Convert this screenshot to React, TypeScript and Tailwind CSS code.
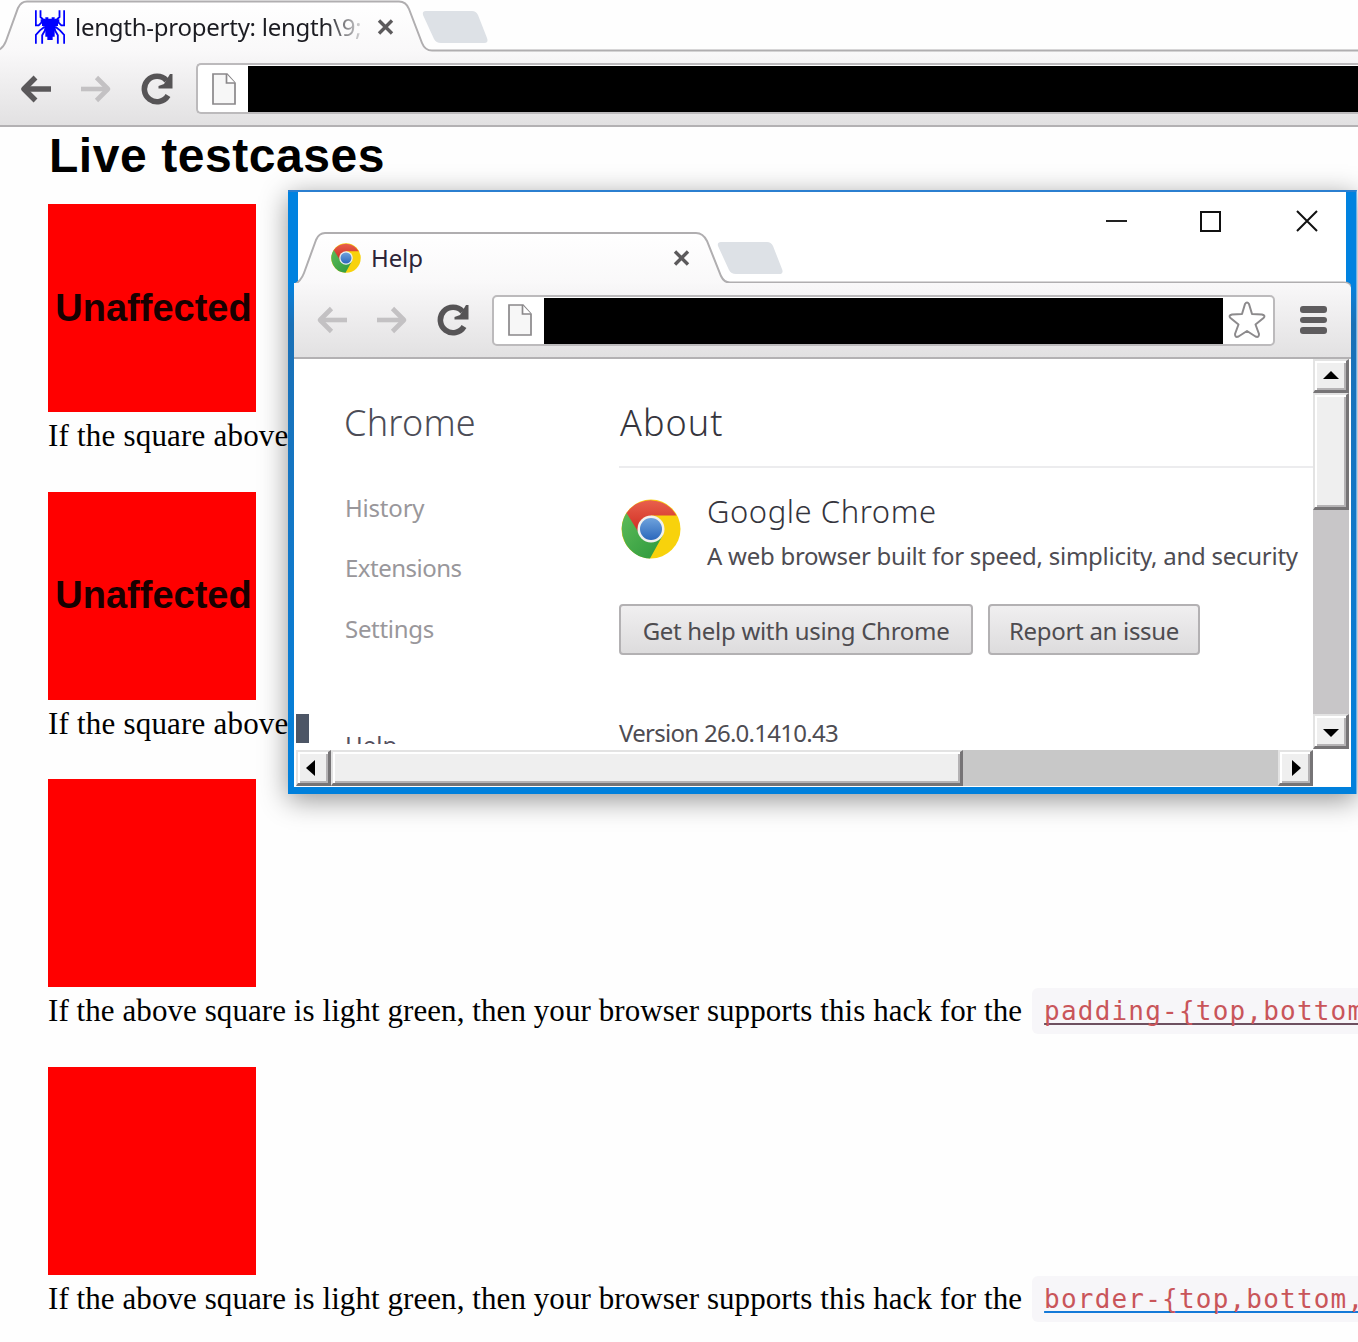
import React from "react";

const SANS = "font-['Noto_Sans','Open_Sans',sans-serif]";

function Spider() {
  return (
    <svg className="h-[34px] w-[30px]" viewBox="105 30 90 102" fill="none" stroke="#0000ff" strokeWidth="5.500">
      <path d="M107.500 31V76H116L124 68H133M121.500 31V51L130 59H136M192.500 31V76H184L176 68H167M178.500 31V51L170 59H164" />
      <path d="M107.500 131V105L120 91L134 80M126.500 131V106L137 88M192.500 131V105L180 91L166 80M173.500 131V106L163 88" />
      <path stroke="none" fill="#0000ff" d="M136 52H145V56H155V52H164V58H178V66H174V78H167V90H164V110H158V120H142V110H136V90H133V78H126V66H122V58H136Z" />
    </svg>
  );
}

function Arrow({ dark = false, flip = false }: { dark?: boolean; flip?: boolean }) {
  return (
    <svg className={flip ? "h-[28px] w-[32px] -scale-x-100" : "h-[28px] w-[32px]"} viewBox="0 0 32 28" fill="none" stroke={dark ? "#5a585a" : "#c3c1c3"} strokeWidth={dark ? 5.500 : 4.600}>
      <path d="M3.500 14H31" />
      <path d="M15.500 2.500L4 14L15.500 25.500" strokeLinejoin="round" />
    </svg>
  );
}

function Reload() {
  return (
    <svg className="h-[32px] w-[32px]" viewBox="0 0 32 32">
      <path d="M25.500 7.500A12.700 12.700 0 1 0 27 22.500" fill="none" stroke="#565456" strokeWidth="5.600" />
      <path d="M31.500 1V15.500H17.500V13L23 11L29 1Z" fill="#565456" />
    </svg>
  );
}

function PageIcon() {
  return (
    <svg className="h-[32px] w-[24px]" viewBox="0 0 24 32" fill="#f7f7f7" stroke="#8a888a" strokeWidth="1.700">
      <path d="M1 1H15L23 10V31H1Z" />
      <path d="M14.500 1V10H23" fill="#fff" />
    </svg>
  );
}

function CloseMark() {
  return (
    <svg className="h-[16px] w-[17px]" viewBox="0 0 17 16" stroke="#5c5a5c" strokeWidth="3.400">
      <path d="M2 1.500L15 14.500M15 1.500L2 14.500" />
    </svg>
  );
}

function NewTab() {
  return (
    <svg className="h-[34px] w-[67px]" viewBox="0 0 67 34">
      <path d="M4 1H50Q54 1 56 5L65 28Q67 33 62 33H19Q14 33 12 29L1 5Q0 1 4 1Z" fill="#dde1e6" />
    </svg>
  );
}

function ChromeLogo({ className }: { className: string }) {
  return (
    <svg className={className} viewBox="0 0 60 60">
      <defs>
        <linearGradient id="lr" x2="0" y2="1"><stop stopColor="#e8604c" /><stop offset="1" stopColor="#cf2a20" /></linearGradient>
        <linearGradient id="lg" x2="1" y2="1"><stop stopColor="#5dbb58" /><stop offset="1" stopColor="#2c983c" /></linearGradient>
        <linearGradient id="lb" x2="0" y2="1"><stop stopColor="#6ea2dc" /><stop offset="1" stopColor="#2c68bc" /></linearGradient>
      </defs>
      <circle cx="30" cy="30" r="29.500" fill="#f8d20c" />
      <path d="M30 30L5.500 14A29.500 29.500 0 0 0 29 59.500L42 36Z" fill="url(#lg)" />
      <path d="M30 30L18 34L5.500 14A29.500 29.500 0 0 1 55.500 16.500H30Z" fill="url(#lr)" />
      <circle cx="30" cy="30" r="13.500" fill="#f1f1ee" />
      <circle cx="30" cy="30" r="11" fill="url(#lb)" />
    </svg>
  );
}

const BTN = "flex shrink-0 items-center justify-center bg-[#efefef] border-t-2 border-l-2 border-t-[#e3e3e3] border-l-[#e3e3e3] border-r-[3px] border-b-[3px] border-r-[#767476] border-b-[#767476] shadow-[inset_2px_2px_0_#fff,inset_-2px_-2px_0_#b5b3b5]";

function ScrollArrow({ d }: { d: string }) {
  return (
    <svg className="h-[16px] w-[16px] shrink-0" viewBox="0 0 16 16"><path d={d} fill="#000" /></svg>
  );
}

function TestCase({ label, children }: { label?: string; children: React.ReactNode }) {
  return (
    <section className="h-[287.5px] whitespace-nowrap">
      <div className="flex h-[208px] w-[208px] items-center justify-center bg-[#ff0000] pl-[3px] font-['Liberation_Sans',sans-serif] text-[38px] font-bold text-[#180000]">
        {label}
      </div>
      <p className="h-[48px] font-['Liberation_Serif',serif] text-[31px] leading-[47px] tracking-[0.07px] text-black">{children}</p>
    </section>
  );
}

function Code({ children, underline }: { children: string; underline: string }) {
  return (
    <code className="mt-[-3px] ml-[10px] inline-block h-[46px] -translate-y-px rounded-[6px] bg-[#f7f6f9] pl-[12px] align-middle font-['DejaVu_Sans_Mono',monospace] text-[26px] leading-[46px] tracking-[1.2px]">
      <span className={`text-[#c9555a] underline decoration-2 underline-offset-[3px] [text-decoration-skip-ink:none] ${underline}`}>{children}</span>
    </code>
  );
}

function HelpWindow() {
  return (
    <div className="absolute top-[190px] left-[288px] flex h-[604px] w-[1069px] flex-col border-t-2 border-r border-t-[#2b7fd0] border-r-[#72aee6] bg-[#0080dc] bg-linear-to-b from-[#0082e0] from-15% via-[#1a70b6] via-22% to-[#0080dc] to-98% shadow-[0_6px_26px_rgba(0,0,0,0.42)]">
      <div className="relative mx-[10px] h-[91px] bg-white">
        <div className="absolute top-[18px] right-[28px] flex w-[212px] items-center">
          <div className="h-[2px] w-[21px] bg-[#222]" />
          <div className="ml-[73px] h-[21px] w-[21px] border-2 border-[#111]" />
          <svg className="ml-[75px] h-[22px] w-[22px]" viewBox="0 0 22 22" stroke="#111" strokeWidth="2"><path d="M1 1L21 21M21 1L1 21" /></svg>
        </div>
      </div>
      <div className="relative ml-[6px] flex h-[504px] w-[1057px] flex-col rounded-t-[6px] bg-white pl-[2px]">
        <div className="absolute -top-[51px] left-0 h-[54px] w-[1057px]">
          <svg className="absolute inset-0 h-[54px] w-[1057px]" viewBox="0 0 1057 54">
            <defs><linearGradient id="t2" x2="0" y2="1"><stop stopColor="#fff" /><stop offset="1" stopColor="#f9f8f9" /></linearGradient></defs>
            <path d="M0 54V53Q7 49 10 41L22 8Q25 1 31 1H402Q409 1 413 9L427 44Q430 50.500 436 50.500H1049Q1056 50.500 1056 54" fill="url(#t2)" stroke="#b0aeb0" strokeWidth="2" />
          </svg>
          <div className={`relative flex h-[51px] items-center pl-[37px] ${SANS}`}>
            <ChromeLogo className="h-[30px] w-[30px]" />
            <span className="ml-[10px] w-[302px] text-[24px] leading-[51px] tracking-[-0.1px] text-[#2c2438]">Help</span>
            <CloseMark />
            <div className="ml-[27px] h-[34px]"><NewTab /></div>
          </div>
        </div>
        <div className="relative -ml-[2px] flex h-[76px] shrink-0 items-center rounded-tr-[6px] border-b-2 border-[#b3b1b3] bg-linear-to-b from-[#f9f8f9] to-[#e2e1e2] pl-[22px]">
          <Arrow />
          <div className="ml-[28px] flex"><Arrow flip /></div>
          <div className="ml-[29px] flex"><Reload /></div>
          <div className="ml-[23px] flex h-[51px] w-[783px] items-center rounded-[5px] border-2 border-[#bcbabc] bg-white pl-[14px]">
            <PageIcon />
            <div className="mt-px ml-[12px] h-[46px] w-[679px] bg-black" />
            <svg className="ml-[5px] h-[38px] w-[38px]" viewBox="0 0 38 38" fill="#fff" stroke="#8c8a8c" strokeWidth="2" strokeLinejoin="round">
              <path d="M17 3Q19 0 21 3L24 13L34 13.500Q38 14.500 35.500 17L27.500 23.500L31 33Q31 37 27.500 35.500L19 30L10.500 35.500Q7 37 7 33L10.500 23.500L2.500 17Q0 14.500 4 13.500L14 13Z" />
            </svg>
          </div>
          <div className="ml-[25px] flex flex-col gap-[4px]">
            <div className="h-[6.500px] w-[27px] rounded-[3px] bg-[#5e5c5e]" />
            <div className="h-[6.500px] w-[27px] rounded-[3px] bg-[#5e5c5e]" />
            <div className="h-[6.500px] w-[27px] rounded-[3px] bg-[#5e5c5e]" />
          </div>
        </div>
        <div className="flex h-[391px]">
          <div className={`flex h-[385px] w-[1017px] overflow-hidden whitespace-nowrap ${SANS}`}>
            <nav className="flex w-[323px] shrink-0 flex-col">
              <h2 className="mt-[42px] ml-[48px] h-[44px] shrink-0 text-[36px] leading-[44px] font-light tracking-[0.2px] text-[#4c4c56]">Chrome</h2>
              <div className="mt-[46px] ml-[49px] flex shrink-0 flex-col gap-[26px] text-[24px] leading-[34.250px] tracking-[-0.5px] text-[#99979b]">
                <a className="tracking-[-0.2px]">History</a>
                <a>Extensions</a>
                <a className="tracking-[-0.3px]">Settings</a>
              </div>
              <div className="mt-[68px] flex h-[29px] shrink-0">
                <div className="h-[29px] w-[13px] shrink-0 bg-[#4d5666]" />
                <span className="mt-[14px] ml-[36px] h-[34px] text-[24px] leading-[34px] text-[#55505f]">Help</span>
              </div>
            </nav>
            <div className="flex flex-col">
              <h1 className="mt-[42px] h-[67px] w-[694px] shrink-0 border-b-2 border-[#ececee] pl-px text-[36px] leading-[44px] font-light tracking-[1px] text-[#35353d]">About</h1>
              <div className="mt-[23px] flex h-[86px] shrink-0">
                <ChromeLogo className="mt-[8px] ml-[2px] h-[60px] w-[60px]" />
                <div className="ml-[26px]">
                  <div className="h-[40px] text-[31px] leading-[40px] font-light tracking-[0.55px] text-[#34343c]">Google Chrome</div>
                  <div className="mt-[8px] h-[34px] text-[24px] leading-[34px] tracking-[-0.26px] text-[#4e4c52]">A web browser built for speed, simplicity, and security</div>
                </div>
              </div>
              <div className="mt-[27px] flex shrink-0 gap-[15px] text-[24px] tracking-[-0.3px] text-[#4e4c50]">
                <button className="flex h-[51px] w-[354px] items-center justify-center rounded-[4px] border-2 border-[#b3b1b3] bg-linear-to-b from-[#f0eff0] to-[#dddcdd] pt-[2px]">Get help with using Chrome</button>
                <button className="flex h-[51px] w-[212px] items-center justify-center rounded-[4px] border-2 border-[#b3b1b3] bg-linear-to-b from-[#f0eff0] to-[#dddcdd] pt-[2px]">Report an issue</button>
              </div>
              <div className="mt-[61px] h-[34px] shrink-0 text-[24px] leading-[34px] tracking-[-0.72px] text-[#4e4c52]">Version 26.0.1410.43</div>
            </div>
          </div>
          <div className="flex h-[390px] w-[36px] flex-col bg-[#c8c6c8]">
            <div className={`h-[34px] ${BTN}`}><ScrollArrow d="M0 11L8 3L16 11Z" /></div>
            <div className={`h-[117px] ${BTN}`} />
            <div className="flex-1" />
            <div className={`h-[35px] ${BTN}`}><ScrollArrow d="M0 6L8 14L16 6Z" /></div>
          </div>
        </div>
        <div className="flex h-[36px] w-[1017px] bg-[#c8c8c8]">
          <div className={`w-[35px] ${BTN}`}><ScrollArrow d="M10 0L1 8L10 16Z" /></div>
          <div className={`w-[632px] ${BTN}`} />
          <div className="flex-1" />
          <div className={`w-[35px] ${BTN}`}><ScrollArrow d="M5 0L14 8L5 16Z" /></div>
        </div>
      </div>
    </div>
  );
}

export default function App() {
  return (
    <div className="relative flex h-[1342px] w-[1358px] flex-col overflow-hidden bg-[#fefefe]">
      <header className="shrink-0">
        <div className="relative h-[52px]">
          <svg className="absolute inset-0 h-[52px] w-[1358px]" viewBox="0 0 1358 52">
            <defs><linearGradient id="t1" x2="0" y2="1"><stop stopColor="#fff" /><stop offset="1" stopColor="#f9f8f9" /></linearGradient></defs>
            <path d="M-4 54V51Q3 49 6 41L18 8Q21 1.500 27 1.500H399Q406 1.500 409 9L422 43Q425 50.500 432 50.500H1362V54" fill="url(#t1)" stroke="#b0aeb0" strokeWidth="2" />
          </svg>
          <div className={`relative flex h-[52px] items-center pt-px pl-[35px] ${SANS}`}>
            <Spider />
            <span className="ml-[10px] w-[302px] whitespace-nowrap bg-linear-to-r from-[#1c1c22] from-83% to-transparent to-97% bg-clip-text text-[24px] leading-[50px] tracking-[-0.25px] text-transparent">length-property: length\9;</span>
            <CloseMark />
            <div className="ml-[28px] h-[34px]"><NewTab /></div>
          </div>
        </div>
        <div className="flex h-[75px] items-center border-b-2 border-[#b3b1b3] bg-linear-to-b from-[#f9f8f9] to-[#e2e1e2] pl-[20px]">
          <Arrow dark />
          <div className="ml-[28px] flex"><Arrow flip /></div>
          <div className="ml-[29px] flex"><Reload /></div>
          <div className="ml-[23px] flex h-[51px] flex-1 items-center rounded-l-[5px] border-2 border-r-0 border-[#bcbabc] bg-white pl-[14px]">
            <PageIcon />
            <div className="mt-px ml-[12px] h-[46px] flex-1 bg-black" />
          </div>
        </div>
      </header>
      <main className="pl-[48px]">
        <h1 className="h-[77px] pl-px font-['Liberation_Sans',sans-serif] text-[48px] leading-[58px] font-bold tracking-[0.55px] text-black">Live testcases</h1>
        <TestCase label="Unaffected"><span className="tracking-[0.2px]">If the square above</span></TestCase>
        <TestCase label="Unaffected"><span className="tracking-[0.2px]">If the square above</span></TestCase>
        <TestCase>
          If the above square is light green, then your browser supports this hack for the
          <Code underline="decoration-[#6d5060]">{"padding-{top,bottom"}</Code>
        </TestCase>
        <TestCase>
          If the above square is light green, then your browser supports this hack for the
          <Code underline="decoration-[#1479d8]">{"border-{top,bottom,"}</Code>
        </TestCase>
      </main>
      <HelpWindow />
    </div>
  );
}
